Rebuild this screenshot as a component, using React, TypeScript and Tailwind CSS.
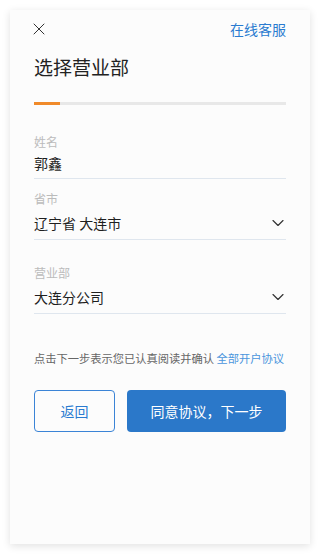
import { ChevronDown, X } from "lucide-react";

const font = { fontFamily: '"Noto Sans CJK SC", "Noto Sans", sans-serif' };

function Field({ label, value, select, mt }: { label: string; value: string; select?: boolean; mt: string }) {
  return (
    <div className={`${mt} border-b border-[#dfe6ee] ${select ? "pb-[5px]" : "pb-[4px]"}`}>
      <div className="text-[12px] leading-[18px] text-[#bbbbbb]">{label}</div>
      <div className={`flex h-[22px] items-center justify-between ${select ? "mt-[4px]" : "mt-[1px]"}`}>
        <span className="text-[14px] leading-[22px] text-[#1f1f1f]">{value}</span>
        {select && <ChevronDown size={20} strokeWidth={1.4} className="-mr-[2px] text-[#333]" />}
      </div>
    </div>
  );
}

export default function App() {
  return (
    <div className="h-[554px] w-[320px] bg-white p-[10px]" style={font}>
      <div className="flex h-[534px] flex-col bg-[#fcfcfc] px-6 pt-[3px] shadow-[0_2px_8px_rgba(0,0,0,0.12)]">
        <div className="flex h-[32px] items-center justify-between">
          <X size={20} strokeWidth={1.2} className="-ml-[5px] text-[#333]" />
          <span className="text-[14px] text-[#2a7bd0]">在线客服</span>
        </div>
        <h1 className="mt-[8px] text-[19px] leading-[28px] text-[#222]">选择营业部</h1>
        <div className="mt-[21px] flex h-[3px]">
          <div className="w-[26px] bg-[#f08a2a]" />
          <div className="flex-1 bg-[#e8e8e8]" />
        </div>
        <Field mt="mt-[28px]" label="姓名" value="郭鑫" />
        <Field mt="mt-[11px]" label="省市" value="辽宁省 大连市" select />
        <Field mt="mt-[24px]" label="营业部" value="大连分公司" select />
        <p className="mt-[35px] whitespace-nowrap text-[11.25px] leading-[18px] text-[#666]">
          点击下一步表示您已认真阅读并确认 <span className="text-[#4a95dc]">全部开户协议</span>
        </p>
        <div className="mt-[23px] flex gap-[12px]">
          <button className="h-[42px] w-[81px] rounded-[4px] border border-[#3b84d6] text-[14px] text-[#2a7bd0]">返回</button>
          <button className="h-[42px] flex-1 rounded-[4px] bg-[#2b78c9] text-[14px] text-white">同意协议，下一步</button>
        </div>
      </div>
    </div>
  );
}
